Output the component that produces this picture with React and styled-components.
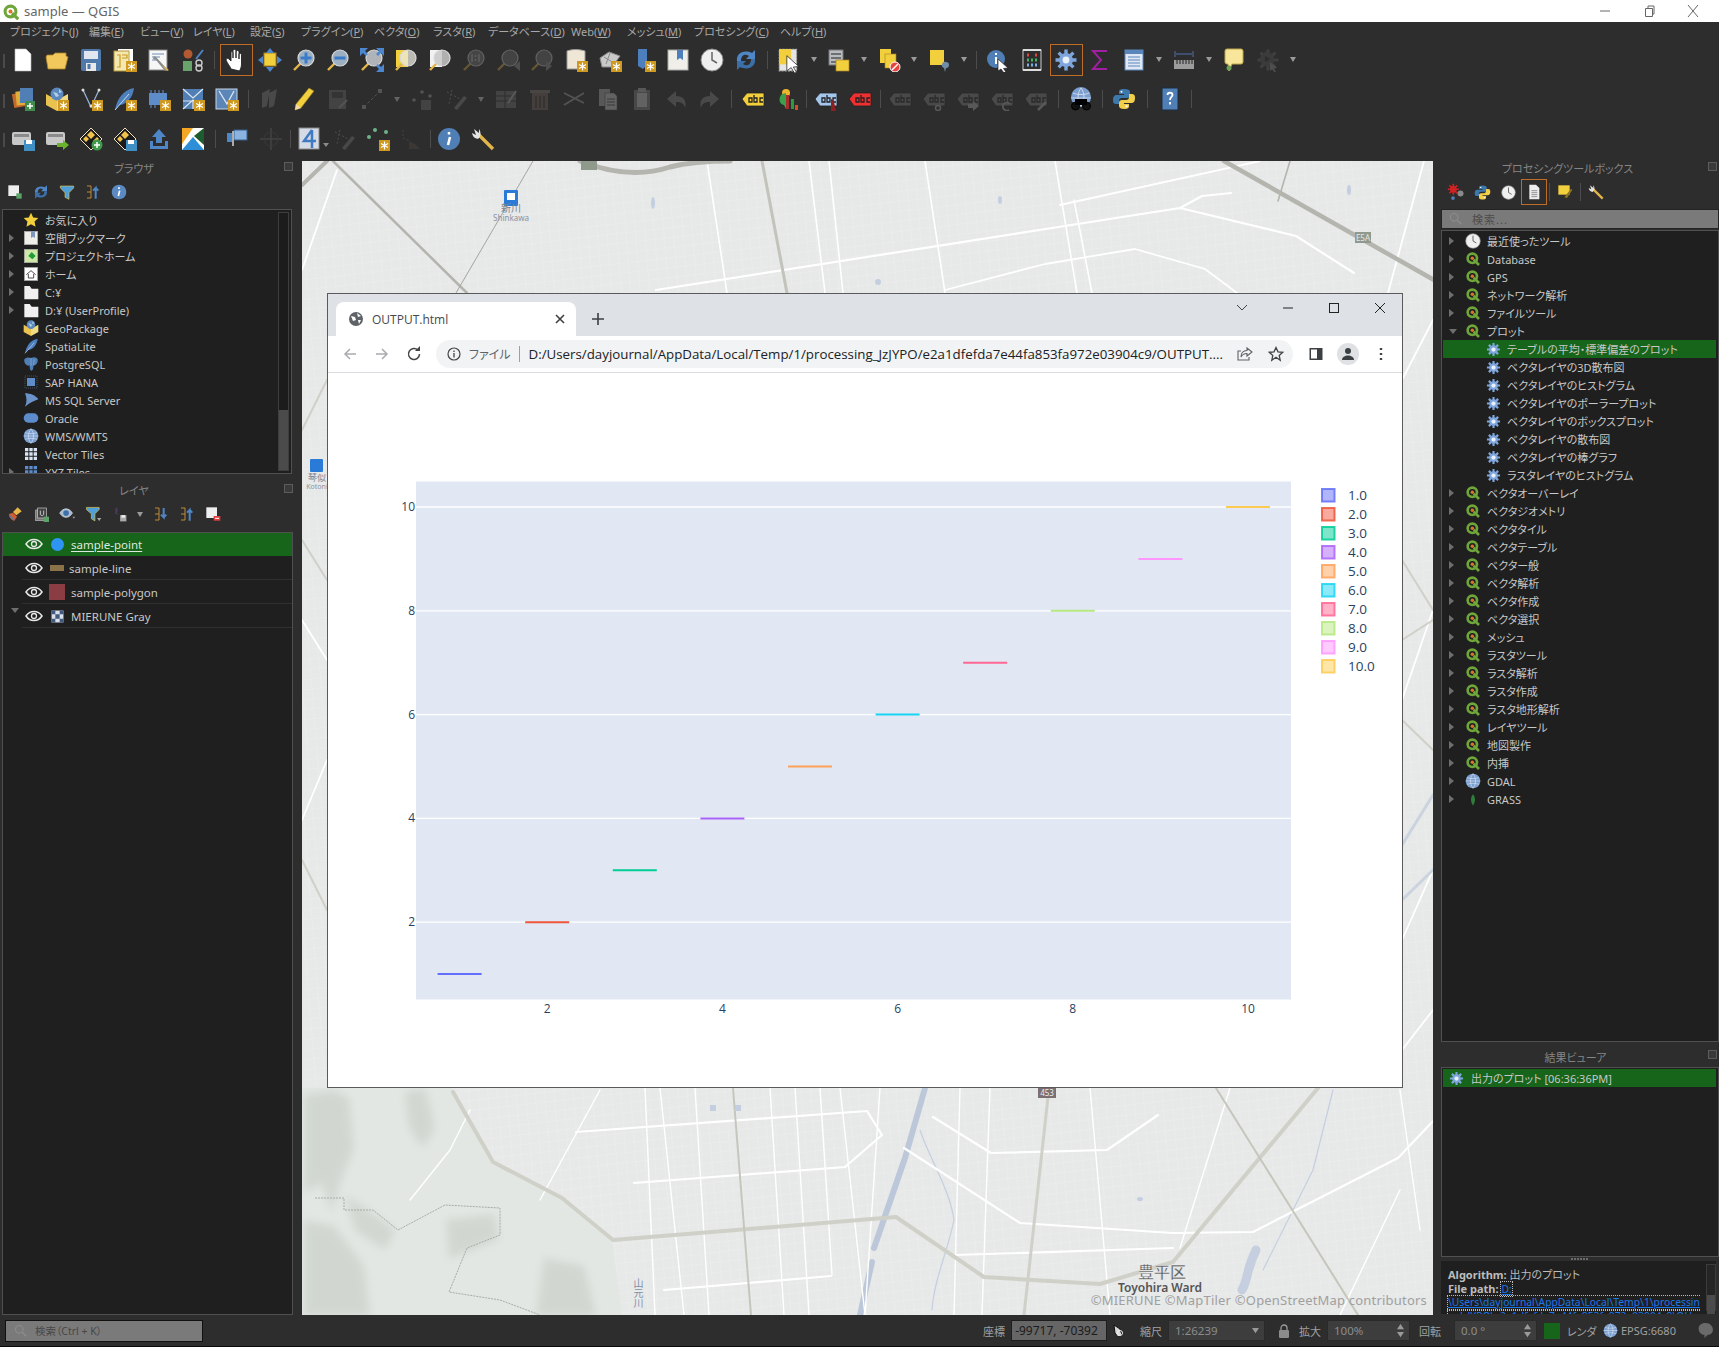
import React from 'react';
import styled, { createGlobalStyle } from 'styled-components';

const SANS = `"Noto Sans", "Noto Sans CJK JP", sans-serif`;
const CHROME = `"Open Sans", "Noto Sans CJK JP", sans-serif`;

const GlobalStyle = createGlobalStyle`
  html, body { margin: 0; padding: 0; background: #2d2d2d; }
  body { font-family: ${SANS}; font-size: 11px; font-feature-settings: "palt"; overflow: hidden; }
`;

const Shell = styled.div`
  width: 1719px;
  height: 1347px;
  display: flex;
  flex-direction: column;
  background: #2d2d2d;
  color: #c4c4c4;
  overflow: hidden;
`;
const TitleBar = styled.div`
  height: 22px;
  flex: none;
  background: #fff;
  display: flex;
  align-items: center;
  color: #666;
  font-size: 13px;
  padding-left: 2px;
  gap: 5px;
`;
const WinButtons = styled.div`
  margin-left: auto;
  display: flex;
  padding-right: 19px;
  gap: 30px;
`;
const MenuBar = styled.div`
  height: 18px;
  flex: none;
  display: flex;
  align-items: center;
  padding-left: 10px;
  color: #a8a8a8;
`;
const MenuItem = styled.span`
  width: ${(p) => p.$w}px;
  flex: none;
  white-space: nowrap;
  u { text-underline-offset: 1px; }
`;
const ToolRow = styled.div`
  height: 39.5px;
  flex: none;
  display: flex;
  align-items: center;
  padding-left: 6px;
  position: relative;
  &::before {
    content: '';
    position: absolute;
    left: 3px;
    top: 14px;
    width: 2px;
    height: 14px;
    background: #4a4a4a;
  }
`;
const ToolBtn = styled.div`
  width: ${(p) => p.$w || 34}px;
  height: 32px;
  flex: none;
  display: flex;
  align-items: center;
  justify-content: center;
  position: relative;
  opacity: ${(p) => (p.$off ? 0.3 : 1)};
  &::before {
    content: '';
    display: ${(p) => (p.$on ? 'block' : 'none')};
    position: absolute;
    left: 50%;
    top: 0;
    margin-left: -16px;
    width: 31px;
    height: 30px;
    border: 1px solid #bd6d28;
  }
  &::after {
    content: '';
    display: ${(p) => (p.$caret ? 'block' : 'none')};
    position: absolute;
    right: -2px;
    bottom: 5px;
    border: 3px solid transparent;
    border-top: 4px solid #8a8a8a;
  }
`;
const ToolCaret = styled.div`
  width: 16px;
  flex: none;
  display: flex;
  justify-content: center;
  opacity: ${(p) => (p.$off ? 0.5 : 1)};
  &::after {
    content: '';
    margin-top: 3px;
    border: 3px solid transparent;
    border-top: 5px solid #9a9a9a;
  }
`;
const ToolSep = styled.div`
  width: ${(p) => p.$w || 9}px;
  flex: none;
  display: flex;
  justify-content: center;
  &::after {
    content: '';
    width: 1px;
    height: 18px;
    background: #4c4c4c;
  }
`;
const Main = styled.div`
  flex: 1;
  min-height: 0;
  margin-top: 2.5px;
  display: grid;
  grid-template-columns: 295px 1131px 279px;
  column-gap: 7px;
`;
const Dock = styled.div`
  display: flex;
  flex-direction: column;
  min-height: 0;
`;
const DockTitle = styled.div`
  box-sizing: border-box;
  height: ${(p) => p.$h || 15}px;
  flex: none;
  display: flex;
  align-items: center;
  justify-content: center;
  color: #858585;
  position: relative;
  margin-top: ${(p) => p.$mt || 0}px;
  padding-right: ${(p) => p.$pr ?? 27}px;
  padding-bottom: 2px;
`;
const FloatMark = styled.span`
  position: absolute;
  right: 2px;
  top: 1px;
  width: 7px;
  height: 7px;
  border: 1px solid #5c5c5c;
  background: #3a3a3a;
`;
const DockTools = styled.div`
  height: 32px;
  flex: none;
  display: flex;
  align-items: center;
  padding-left: ${(p) => p.$pl || 2}px;
`;
const SmallBtn = styled.div`
  width: ${(p) => p.$w || 26}px;
  height: 26px;
  flex: none;
  display: flex;
  align-items: center;
  justify-content: center;
  position: relative;
  &::before {
    content: '';
    display: ${(p) => (p.$on ? 'block' : 'none')};
    position: absolute;
    inset: 0;
    border: 1px solid #bd6d28;
  }
`;
const Well = styled.div`
  box-sizing: border-box;
  background: #1f1f1f;
  border: 1px solid #505050;
  margin: ${(p) => p.$m || '1px 3px 0 2px'};
  height: ${(p) => (p.$h ? `${p.$h}px` : 'auto')};
  flex: ${(p) => (p.$h ? 'none' : 1)};
  min-height: 0;
  overflow: hidden;
  display: flex;
`;
const TreeBody = styled.div`
  flex: 1;
  min-width: 0;
  padding-top: ${(p) => p.$pt ?? 2}px;
`;
const ScrollTrack = styled.div`
  width: 9px;
  flex: none;
  margin: 2px 2px 2px 0;
  background: #1c1c1c;
  border: 1px solid #3d3d3d;
  display: flex;
  flex-direction: column;
  justify-content: flex-end;
`;
const ScrollThumb = styled.div`
  height: ${(p) => p.$h}px;
  background: #4b4b4b;
`;
const Row = styled.div`
  height: 18px;
  display: flex;
  align-items: center;
  white-space: nowrap;
  padding-left: ${(p) => p.$pl}px;
  color: #c8c8c8;
  background: ${(p) => (p.$sel ? '#16651a' : 'transparent')};
  margin: ${(p) => (p.$sel ? '0 2px 0 1px' : '0')};
`;
const Expander = styled.span`
  width: 0;
  height: 0;
  flex: none;
  border-style: solid;
  border-color: transparent;
  ${(p) =>
    p.$open
      ? 'border-width: 5px 4px 0 4px; border-top-color: #6e6e6e; margin-top: 1px;'
      : 'border-width: 4px 0 4px 5px; border-left-color: #6e6e6e;'}
`;
const ExpanderSlot = styled.span`
  width: ${(p) => p.$w}px;
  flex: none;
  display: flex;
`;
const RowIcon = styled.span`
  width: ${(p) => p.$w || 18}px;
  height: 16px;
  flex: none;
  display: flex;
  align-items: center;
  justify-content: center;
  margin-right: ${(p) => p.$mr ?? 5}px;
`;
const LayerRow = styled.div`
  box-sizing: border-box;
  height: 23px;
  margin-bottom: 1px;
  margin-left: ${(p) => (p.$sel ? 0 : '19px')};
  display: flex;
  align-items: center;
  position: relative;
  padding-left: ${(p) => (p.$sel ? '19px' : '0')};
  background: ${(p) => (p.$sel ? '#16651a' : 'transparent')};
  border-bottom: 1px solid ${(p) => (p.$sel ? '#16651a' : '#303030')};
  color: ${(p) => (p.$sel ? '#dfe8df' : '#c8c8c8')};
  font-size: 11.5px;
  u { text-underline-offset: 2px; }
`;
const LayerArrow = styled.span`
  position: absolute;
  left: -11px;
  top: 8px;
`;
const EyeSlot = styled.span`
  width: 24px;
  flex: none;
  display: flex;
  justify-content: center;
  margin-right: 2px;
`;
const SymbolSlot = styled.span`
  width: 18px;
  flex: none;
  display: flex;
  justify-content: center;
  margin-right: ${(p) => p.$mr ?? 5}px;
`;
const PointSym = styled.span`
  width: 13px;
  height: 13px;
  border-radius: 50%;
  background: #2f95f5;
`;
const LineSym = styled.span`
  width: 14px;
  height: 6px;
  background: #8a7349;
`;
const PolySym = styled.span`
  width: 16px;
  height: 16px;
  background: #8a3d42;
`;
const SearchBox = styled.div`
  box-sizing: border-box;
  height: 20px;
  flex: none;
  margin-top: 1px;
  background: #7a7a7a;
  border: 1px solid #242424;
  margin-left: 1px;
  display: flex;
  align-items: center;
  padding-left: 7px;
  gap: 9px;
  color: #4c4c4c;
  letter-spacing: 1px;
`;
const MapPane = styled.div`
  position: relative;
  overflow: hidden;
  background: #e8e9e9;
`;
const MapSvg = styled.svg`
  display: block;
  width: 1131px;
  height: 1154px;
`;
const Browser = styled.div`
  position: absolute;
  left: 25px;
  top: 132px;
  width: 1074px;
  height: 793px;
  border: 1px solid #5a5a5a;
  background: #fff;
  display: flex;
  flex-direction: column;
  font-family: ${CHROME};
  font-feature-settings: normal;
`;
const TabStrip = styled.div`
  height: 42px;
  flex: none;
  background: #dee1e6;
  display: flex;
  align-items: flex-end;
  padding-left: 8px;
  position: relative;
`;
const Tab = styled.div`
  width: 240px;
  height: 34px;
  background: #fff;
  border-radius: 8px 8px 0 0;
  display: flex;
  align-items: center;
  padding: 0 9px 0 12px;
  box-sizing: border-box;
  color: #45494d;
  font-size: 12px;
  gap: 8px;
`;
const TabTitle = styled.span`
  flex: 1;
`;
const NewTab = styled.div`
  width: 30px;
  height: 34px;
  margin-left: 7px;
  display: flex;
  align-items: center;
  justify-content: center;
`;
const WindowCtl = styled.div`
  position: absolute;
  right: 16px;
  top: 8px;
  display: flex;
  gap: 34px;
  align-items: center;
`;
const UrlBar = styled.div`
  height: 36px;
  flex: none;
  border-bottom: 1px solid #dadce0;
  display: flex;
  align-items: center;
  padding-left: 6px;
  box-sizing: content-box;
`;
const NavBtn = styled.div`
  width: 32px;
  flex: none;
  display: flex;
  justify-content: center;
`;
const Omni = styled.div`
  margin-left: 6px;
  width: 857px;
  height: 28px;
  flex: none;
  border-radius: 14px;
  background: #f1f3f4;
  display: flex;
  align-items: center;
  padding-left: 11px;
  box-sizing: border-box;
  font-size: 13.3px;
  color: #202124;
  white-space: nowrap;
`;
const SiteLabel = styled.span`
  color: #5f6368;
  margin-left: 8px;
  font-family: "Noto Sans CJK JP", sans-serif;
  font-feature-settings: "palt";
  font-size: 12px;
  padding-right: 8px;
  border-right: 1px solid #9aa0a6;
  line-height: 16px;
  margin-right: 9px;
`;
const UrlText = styled.span`
  width: 695px;
  flex: none;
  overflow: hidden;
`;
const OmniIcon = styled.span`
  flex: none;
  margin-left: ${(p) => p.$ml}px;
  display: flex;
`;
const Avatar = styled.span`
  width: 22px;
  height: 22px;
  border-radius: 50%;
  background: #dfe1e5;
  display: flex;
  align-items: center;
  justify-content: center;
  margin-left: ${(p) => p.$ml}px;
  flex: none;
`;
const ChartSvg = styled.svg`
  display: block;
  flex: 1;
  width: 1073px;
  min-height: 0;
`;
const ResultBody = styled.div`
  flex: 1;
  padding-top: 1px;
`;
const Splitter = styled.div`
  height: 4px;
  flex: none;
  display: flex;
  justify-content: center;
  align-items: center;
  &::after {
    content: '';
    width: 17px;
    height: 2px;
    background: repeating-linear-gradient(90deg, #6c6c6c 0 2px, transparent 2px 3px);
  }
`;
const InfoPane = styled.div`
  height: 53px;
  flex: none;
  background: #1f1f1f;
  margin-left: 1px;
  margin-right: 3px;
  display: flex;
  overflow: hidden;
`;
const InfoText = styled.div`
  flex: 1;
  min-width: 0;
  padding: 7px 0 0 7px;
  line-height: 13.5px;
  font-size: 11px;
  white-space: nowrap;
  overflow: hidden;
  color: #bcbcbc;
  b { color: #bdbdbd; }
`;
const PathLink = styled.a`
  color: #1a77e8;
  text-decoration: underline;
  outline: 1px dotted #bbb;
  font-size: 10.3px;
  display: ${(p) => (p.$block ? 'block' : 'inline')};
`;
const InfoScroll = styled.div`
  width: 10px;
  flex: none;
  margin: 3px 0 3px 5px;
  background: #252525;
  border: 1px solid #3c3c3c;
  box-sizing: border-box;
`;
const InfoThumb = styled.div`
  height: 30px;
  background: #4b4b4b;
  margin-top: 30px;
`;
const StatusBar = styled.div`
  height: 31px;
  flex: none;
  border-bottom: 1px solid #0a0a0a;
  display: flex;
  align-items: center;
`;
const GlobalSearch = styled.div`
  width: 198px;
  height: 22px;
  box-sizing: border-box;
  margin-left: 5px;
  background: #7a7a7a;
  border: 1px solid #111;
  display: flex;
  align-items: center;
  padding-left: 8px;
  gap: 7px;
  color: #474747;
  font-size: 10.5px;
`;
const StatusLabel = styled.span`
  margin-left: ${(p) => p.$ml}px;
  width: ${(p) => p.$w || 24}px;
  flex: none;
  color: #a0a0a0;
  white-space: nowrap;
`;
const StatusField = styled.div`
  margin-left: ${(p) => p.$ml}px;
  width: ${(p) => p.$w}px;
  height: 21px;
  box-sizing: border-box;
  flex: none;
  border: 1px solid ${(p) => (p.$light ? '#1e1e1e' : '#2a2a2a')};
  background: ${(p) => (p.$light ? '#666' : '#3d3d3d')};
  color: ${(p) => (p.$light ? '#1c1c1c' : '#8c8c8c')};
  font-size: ${(p) => (p.$light ? 12 : 11.5)}px;
  display: flex;
  align-items: center;
  justify-content: ${(p) => (p.$light ? 'center' : 'flex-start')};
  padding: 0 5px 0 ${(p) => (p.$light ? 0 : 6)}px;
  white-space: nowrap;
`;
const FieldEnd = styled.span`
  margin-left: auto;
  display: flex;
  flex-direction: column;
  gap: 1px;
`;
const Swatch = styled.span`
  width: 16px;
  height: 16px;
  margin-left: ${(p) => p.$ml}px;
  background: #16651a;
  flex: none;
`;
const StatusIcon = styled.span`
  margin-left: ${(p) => p.$ml}px;
  display: flex;
  flex: none;
`;

const Svg = ({ s = 24, children, vb = '0 0 24 24' }) => (
  <svg width={s} height={s} viewBox={vb} fill="none">
    {children}
  </svg>
);

const qgis = (
  <g fill="none">
    <circle cx="11" cy="11" r="7" stroke="#6fa63a" strokeWidth="4" />
    <path d="M13 13l8 8" stroke="#6fa63a" strokeWidth="4" />
    <circle cx="11" cy="11" r="2.6" fill="#d9742a" />
  </g>
);
const gearTeeth = 'M12 1.5v21M1.5 12h21M4.6 4.6l14.8 14.8M19.4 4.6L4.6 19.4';
const gear = (
  <g>
    <path d={gearTeeth} stroke="#7fa6dc" strokeWidth="3.4" />
    <circle cx="12" cy="12" r="7" fill="#7fa6dc" />
    <circle cx="12" cy="12" r="3.4" fill="#e9f0fa" />
  </g>
);
const star = (
  <g>
    <rect x="13" y="13" width="11" height="11" fill="#cf981f" />
    <path d="M18.5 14.5v8M15 16.5l7 4M22 16.5l-7 4" stroke="#fff" strokeWidth="1.2" />
  </g>
);
const mag = (lens, extra) => (
  <g>
    <path d="M2 22l7-7" stroke="#e3b64a" strokeWidth="2.4" />
    <circle cx="14" cy="10" r="8" fill={lens} stroke="#d8d8d8" strokeWidth="1.2" />
    {extra}
  </g>
);
const abc = (fill, extra) => (
  <g>
    <path d="M1 12l5-6h17v13H6z" fill={fill} stroke="#222" strokeWidth=".8" />
    <path d="M8 15v-4h3v4zM13 8v7h3v-4h-3M22 11h-3v4h3" stroke="#222" strokeWidth="1.3" />
    {extra}
  </g>
);
const sheet = (
  <path d="M4 1h11l5 5v17H4z" fill="#fff" stroke="#bbb" strokeWidth=".6" />
);

const ICONS = {
  doc: sheet,
  folder: <path d="M2 7h6l2-2h11v3l2 1-3 12H3L1 9z" fill="#f2c75c" stroke="#a98325" strokeWidth=".8" />,
  save: (
    <g>
      <rect x="2" y="1" width="20" height="22" rx="2" fill="#4f79ab" />
      <rect x="5" y="3" width="14" height="8" fill="#dfe6ef" />
      <rect x="7" y="15" width="10" height="8" fill="#e8e8e8" />
      <rect x="8.5" y="16" width="3" height="5" fill="#4f79ab" />
    </g>
  ),
  layoutNew: (
    <g>
      <rect x="5" y="1" width="15" height="20" fill="#fff" />
      <rect x="1" y="3" width="15" height="20" fill="#f4e7b0" stroke="#b99a39" />
      <path d="M4 7h3v12H4M9 7h5v3H9" stroke="#c89c20" strokeWidth="1.2" />
      {star}
    </g>
  ),
  layoutMgr: (
    <g>
      <rect x="2" y="2" width="18" height="20" fill="#f6f6f6" stroke="#888" />
      <path d="M5 6h12M5 9h8M5 12h6" stroke="#6d8db8" />
      <path d="M9 9l11 12-2 2-9-11-3-1 1-3z" fill="#8c8c8c" />
      <path d="M15 17l7 5-2 1z" fill="#e3b64a" />
    </g>
  ),
  style: (
    <g>
      <circle cx="7" cy="6" r="4.5" fill="#b45a32" />
      <path d="M15 11l7-9" stroke="#4f84c4" strokeWidth="2" />
      <rect x="2" y="13" width="9" height="10" fill="#68a36b" />
      <circle cx="18" cy="15" r="3" stroke="#ccc" strokeWidth="1.4" />
      <circle cx="18" cy="20" r="3" stroke="#ccc" strokeWidth="1.4" />
    </g>
  ),
  hand: (
    <path
      d="M7 21c-1-3-4-6-5-9 0-2 2-2 3-1l2 2V5c0-2 2-2 2 0v5-7c0-2 3-2 3 0v7-6c0-2 3-2 3 0v7-4c0-2 2.500-2 2.500 0v9c0 3-1 5-2 7z"
      fill="#fff"
      stroke="#222"
      strokeWidth=".9"
    />
  ),
  pan: (
    <g>
      <rect x="6" y="5" width="12" height="13" fill="#f2cf3c" stroke="#a98325" />
      <path d="M12 0l-4 5h8zM12 24l-4-5h8zM0 12l5-4v8zM24 12l-5-4v8z" fill="#4b86cf" />
    </g>
  ),
  zoomIn: mag('#9db0c2', <path d="M14 4.500v11M8.500 10h11" stroke="#3a7cc9" strokeWidth="3" />),
  zoomOut: mag('#9db0c2', <path d="M8.500 10h11" stroke="#3a7cc9" strokeWidth="3" />),
  zoomFull: (
    <g>
      {mag('#b0b4b8')}
      <path d="M0 0h8L5 3l3 3-2 2-3-3-3 3zM24 0h-8l3 3-3 3 2 2 3-3 3 3zM24 24h-8l3-3-3-3 2-2 3 3 3-3z" fill="#4b86cf" />
    </g>
  ),
  zoomSel: (
    <g>
      <rect x="2" y="2" width="12" height="17" fill="#f2cf3c" />
      {mag('rgba(235,235,225,.75)')}
    </g>
  ),
  zoomLayer: (
    <g>
      <rect x="2" y="2" width="12" height="17" fill="#f2f2f2" />
      {mag('rgba(200,200,200,.85)')}
    </g>
  ),
  zoom11: mag('#7d7d7d', <path d="M10 6v8M17 6v8M13.500 7v2M13.500 11v2" stroke="#ccc" strokeWidth="1.5" />),
  zoomPrev: mag('#777', <path d="M24 13l-6 5 6 5z" fill="#999" />),
  zoomNext: mag('#777', <path d="M16 13l6 5-6 5z" fill="#999" />),
  book: (
    <g>
      <path d="M3 3c5-2 12-2 18 0v18H3z" fill="#efe7d5" stroke="#999" />
      {star}
    </g>
  ),
  mapStar: (
    <g>
      <path d="M2 10l9-6 11 4-8 11H4z" fill="#c9c9c9" stroke="#888" />
      <path d="M6 9l10 6M12 5L8 16" stroke="#8a8a8a" />
      {star}
    </g>
  ),
  tabStar: (
    <g>
      <path d="M6 1h9v16l-4 4-5-3z" fill="#4c7fbc" />
      {star}
    </g>
  ),
  tabBook: (
    <g>
      <rect x="2" y="2" width="20" height="20" fill="#efeee8" stroke="#aaa" />
      <path d="M11 2h6v10l-3-2-3 2z" fill="#4c7fbc" />
    </g>
  ),
  clock: (
    <g>
      <circle cx="12" cy="12" r="11" fill="#efefef" stroke="#888" />
      <path d="M12 4v8l5 3" stroke="#666" strokeWidth="1.5" />
    </g>
  ),
  refresh: (
    <g>
      <path d="M3 13C2 6 9 1 18 5l3-3v9h-9l3-3c-5-3-8 0-8 5z" fill="#4f86c6" />
      <path d="M21 11c1 7-6 12-15 8l-3 3v-9h9l-3 3c5 3 8 0 8-5z" fill="#3b6fa8" />
    </g>
  ),
  selFeat: (
    <g>
      <path d="M3 2h16v20H3z" fill="#e5e5e5" stroke="#aaa" strokeDasharray="2 1" />
      <rect x="3" y="2" width="11" height="14" fill="#f2cf3c" />
      <path d="M10 8l11 10-5 .5 3 5-2 .5-3-5-4 3z" fill="#fff" stroke="#222" strokeWidth=".7" />
    </g>
  ),
  attrTable: (
    <g>
      <rect x="2" y="2" width="14" height="15" fill="#b9bcc2" stroke="#777" />
      <path d="M4 6h10M4 10h10M4 14h10" stroke="#555" strokeWidth="1.3" />
      <rect x="9" y="12" width="13" height="11" fill="#f2cf3c" stroke="#a98325" strokeWidth=".7" />
    </g>
  ),
  deselect: (
    <g>
      <rect x="3" y="1" width="11" height="14" fill="#f2cf3c" />
      <rect x="8" y="6" width="11" height="14" fill="#f2cf3c" stroke="#a98325" strokeWidth=".6" />
      <circle cx="18" cy="19" r="5" fill="#e4433f" stroke="#fff" />
      <path d="M15 22l6-6" stroke="#fff" strokeWidth="1.4" />
    </g>
  ),
  selPin: (
    <g>
      <rect x="3" y="2" width="14" height="15" fill="#f2cf3c" />
      <path d="M19 14a3 3 0 1 1 0 6l-1 4-1-4a3 3 0 0 1 2-6z" fill="#6f8da8" />
    </g>
  ),
  identify: (
    <g>
      <circle cx="10" cy="11" r="9" fill="#4f7fb5" />
      <path d="M10 5v2M10 9v7" stroke="#fff" strokeWidth="2" />
      <path d="M12 11l10 9-4.500.5 2.500 3.500-2 1-3-4-3 2z" fill="#fff" stroke="#222" strokeWidth=".7" />
    </g>
  ),
  abacus: (
    <g>
      <rect x="3" y="2" width="18" height="20" stroke="#ccc" />
      <path d="M3 2h18M3 22h18" stroke="#ddd" strokeWidth="2" />
      <path d="M7 7h2M15 7h2" stroke="#e0463e" strokeWidth="3" />
      <path d="M7 12h10" stroke="#43b463" strokeWidth="3" strokeDasharray="2 2" />
      <path d="M7 17h10" stroke="#7cb2e8" strokeWidth="3" strokeDasharray="2 2" />
    </g>
  ),
  gear,
  sigma: <path d="M19 3H5l8 9-8 9h14" stroke="#a01fa0" strokeWidth="2" />,
  table: (
    <g>
      <rect x="3" y="2" width="18" height="20" fill="#dfe8f4" stroke="#5a86bc" />
      <rect x="3" y="2" width="18" height="4" fill="#5a86bc" />
      <path d="M6 9h12M6 12h12M6 15h12M6 18h12" stroke="#5a86bc" strokeWidth="1.2" />
    </g>
  ),
  ruler: (
    <g>
      <path d="M3 6h18M3 3v6M21 3v6" stroke="#3d4f6d" strokeWidth="2" />
      <rect x="2" y="12" width="20" height="9" fill="#9c9c9c" />
      <path d="M5 12v4M8 12v4M11 12v4M14 12v4M17 12v4M20 12v4" stroke="#222" />
    </g>
  ),
  tip: (
    <g>
      <path d="M3 3q0-2 2-2h14q2 0 2 2v11q0 2-2 2H10l-3 7-1-7H5q-2 0-2-2z" fill="#f8e79a" stroke="#bda74a" />
      <circle cx="7" cy="20" r="2.500" fill="#6fa05a" />
    </g>
  ),
  macro: (
    <g>
      <path d={gearTeeth} stroke="#6a6a6a" strokeWidth="3" />
      <circle cx="11" cy="11" r="7" fill="#5c5c5c" />
      <path d="M9 8l5 3-5 3z" fill="#2d2d2d" />
      <path d="M14 14l7 6-3 .5 2 3.500-1.500.5-2-3-2.500 1z" fill="#9a9a9a" />
    </g>
  ),
  layers: (
    <g>
      <rect x="2" y="6" width="13" height="14" fill="#c46a2a" transform="rotate(-10 8 13)" />
      <rect x="5" y="4" width="13" height="14" fill="#e0ae3c" transform="rotate(-6 11 11)" />
      <rect x="9" y="1" width="13" height="15" fill="#4f7fb5" />
      <rect x="14" y="14" width="10" height="10" fill="#418c4a" />
      <path d="M19 16v6M16 19h6" stroke="#fff" strokeWidth="1.5" />
    </g>
  ),
  geopkg: (
    <g>
      <path d="M1 7l11 6v11L1 18z" fill="#e9c24f" />
      <path d="M23 7l-11 6v11l11-6z" fill="#f3db83" />
      <circle cx="12" cy="7" r="6.500" fill="#5b88bd" />
      <path d="M8 5l4 1 2 3-3 1zM14 2l3 3-3 1z" fill="#b4cde8" />
      {star}
    </g>
  ),
  geopkgPlain: (
    <g>
      <path d="M1 7l11 6v11L1 18z" fill="#e9c24f" />
      <path d="M23 7l-11 6v11l11-6z" fill="#f3db83" />
      <circle cx="12" cy="7" r="6.500" fill="#5b88bd" />
      <path d="M8 5l4 1 2 3-3 1zM14 2l3 3-3 1z" fill="#b4cde8" />
    </g>
  ),
  vertex: (
    <g>
      <path d="M4 3l8 17 8-17" stroke="#9ab7dc" strokeWidth="1.2" />
      <circle cx="4" cy="3" r="1.500" fill="#ddd" />
      <circle cx="20" cy="3" r="1.500" fill="#ddd" />
      <circle cx="12" cy="19" r="1.500" fill="#ddd" />
      {star}
    </g>
  ),
  vectorBox: (
    <g>
      <rect x="1" y="2" width="21" height="20" fill="#5d86b8" stroke="#c7d6e8" />
      <path d="M4 4l8 13 7-13" stroke="#dfe8f4" strokeWidth="1.300" />
      {star}
    </g>
  ),
  featherStar: (
    <g>
      <path d="M2 23C4 12 10 3 21 1c-1 10-8 17-15 17z" fill="#4c7fbc" />
      <path d="M2 23L16 7" stroke="#c7dcf2" />
      {star}
    </g>
  ),
  hanaStar: (
    <g>
      <path d="M4 3v3M8 3v3M12 3v3M16 3v3M4 18v3M8 18v3" stroke="#6f93c4" />
      <rect x="2" y="6" width="18" height="12" fill="#5d8cc9" />
      {star}
    </g>
  ),
  meshStar: (
    <g>
      <rect x="2" y="2" width="20" height="20" fill="#4f7fb5" />
      <path d="M2 2l10 9L22 2M2 22l10-9 10 9M2 14h20M12 14v8" stroke="#dfe8f4" strokeWidth="1.2" />
      {star}
    </g>
  ),
  feather: (
    <g>
      <path d="M3 23C5 12 11 3 22 1c-1 10-8 17-15 17z" fill="#4c7fbc" />
      <path d="M3 23L17 7" stroke="#c7dcf2" />
    </g>
  ),
  hana: (
    <g>
      <rect x="3" y="3" width="18" height="18" stroke="#6f93c4" strokeDasharray="1 2" />
      <rect x="6" y="6" width="12" height="12" fill="#5d8cc9" />
    </g>
  ),
  edit: (
    <g>
      <path d="M4 6l8-4-3 17-5 2zM11 6l8-4-3 17-5 2z" fill="#8a8a8a" />
    </g>
  ),
  pencil: (
    <g>
      <path d="M17 1l5 3L9 21l-6 2 1-6z" fill="#f2cf3c" stroke="#8e7322" strokeWidth=".7" />
      <path d="M3 23l1-6 5 4z" fill="#eed9ac" />
    </g>
  ),
  saveEdit: (
    <g>
      <rect x="3" y="3" width="17" height="19" fill="#777" />
      <rect x="6" y="5" width="11" height="6" fill="#444" />
      <path d="M13 21l8-8" stroke="#aaa" strokeWidth="2" />
    </g>
  ),
  line: (
    <g>
      <path d="M4 20L20 4" stroke="#aaa" strokeDasharray="3 2" />
      <rect x="2" y="18" width="4" height="4" fill="#aaa" />
      <rect x="18" y="2" width="4" height="4" fill="#aaa" />
    </g>
  ),
  points: (
    <g>
      <circle cx="4" cy="13" r="1.800" fill="#aaa" />
      <circle cx="12" cy="5" r="1.800" fill="#aaa" />
      <circle cx="20" cy="9" r="1.800" fill="#aaa" />
      <rect x="11" y="13" width="10" height="10" fill="#777" />
    </g>
  ),
  vtool: (
    <g>
      <path d="M3 5l15 8M8 3l-3 14" stroke="#999" strokeDasharray="2 2" />
      <path d="M10 21l10-12 3 2-10 12z" fill="#888" />
    </g>
  ),
  editTable: (
    <g>
      <rect x="2" y="4" width="20" height="17" fill="#777" />
      <path d="M2 9h20M2 14h20M11 4v17" stroke="#333" />
      <path d="M14 16l8-12" stroke="#bbb" strokeWidth="2" />
    </g>
  ),
  trash: (
    <g>
      <path d="M4 6h16v17H4z" fill="#7a6a64" />
      <path d="M2 3h20v3H2z" fill="#8c7c74" />
      <path d="M8 9v12M12 9v12M16 9v12" stroke="#3c3430" strokeWidth="1.500" />
    </g>
  ),
  scissors: <path d="M2 6l20 10M2 18L22 6" stroke="#aaa" strokeWidth="1.800" />,
  copy: (
    <g>
      <path d="M3 2h11v17H3z" fill="#bbb" />
      <path d="M9 6h9l3 3v14H9z" fill="#ddd" stroke="#555" strokeWidth=".6" />
      <path d="M11 12h8M11 15h8M11 18h8" stroke="#555" />
    </g>
  ),
  paste: (
    <g>
      <rect x="4" y="3" width="16" height="20" fill="#888" />
      <rect x="7" y="6" width="10" height="14" fill="#ddd" />
      <rect x="8" y="1" width="8" height="4" fill="#bbb" />
    </g>
  ),
  undo: <path d="M21 21c2-8-2-12-9-12V4L3 12l9 8v-5c5 0 8 1 9 6z" fill="#8a8a8a" />,
  redo: <path d="M3 21c-2-8 2-12 9-12V4l9 8-9 8v-5c-5 0-8 1-9 6z" fill="#8a8a8a" />,
  abcY: abc('#f3cf3c'),
  pinChart: (
    <g>
      <circle cx="11" cy="6" r="4" fill="#efb52d" />
      <path d="M7 7c-4 4-3 10 2 11l2 4V6z" fill="#3d9e4b" />
      <rect x="11" y="8" width="3" height="14" fill="#a92c2c" />
      <rect x="16" y="12" width="3" height="10" fill="#2d9b3c" />
      <rect x="20" y="18" width="3" height="5" fill="#d34f28" />
    </g>
  ),
  abcB: abc('#a3c6ea', <path d="M17 12a3.500 3.500 0 0 1 3 3l2 9h-5z" fill="#8c1f1f" />),
  abcR: abc('#f03030'),
  abcG: abc('#8a8a8a'),
  abcPin: abc('#8a8a8a', <circle cx="16" cy="21" r="2.500" stroke="#bbb" strokeWidth="1.500" />),
  abcMove: abc('#8a8a8a', <path d="M12 17h5v-3l6 5-6 5v-3h-5z" fill="#bbb" />),
  abcRot: abc('#8a8a8a', <path d="M20 17a4 4 0 1 0-1 6" stroke="#bbb" strokeWidth="1.800" />),
  abcEdit: abc('#8a8a8a', <path d="M14 23l8-8" stroke="#bbb" strokeWidth="2.500" />),
  wmsBino: (
    <g>
      <circle cx="12" cy="10" r="10" fill="#7c9fd0" />
      <path d="M4 6c4 2 12 2 16 0M2 11h20M12 1c-4 5-4 14 0 18M12 1c4 5 4 14 0 18" stroke="#e7eef7" strokeWidth=".7" />
      <circle cx="6.500" cy="19" r="4" fill="#111" stroke="#000" />
      <circle cx="17.500" cy="19" r="4" fill="#111" stroke="#000" />
      <rect x="6" y="12" width="12" height="6" fill="#000" />
    </g>
  ),
  python: (
    <g>
      <path d="M12 2c-4 0-5 1-5 3v2h5v1H5c-3 0-4 2-4 5s1 4 3 4h3v-3c0-2 1-3 3-3h5c2 0 3-1 3-3V5c0-2-2-3-6-3z" fill="#3d78ad" />
      <path d="M12 22c4 0 5-1 5-3v-2h-5v-1h7c3 0 4-2 4-5s-1-4-3-4h-3v3c0 2-1 3-3 3H10c-2 0-3 1-3 3v3c0 2 2 3 5 3z" fill="#f2cf4a" />
      <circle cx="9.500" cy="4.800" r="1" fill="#fff" />
      <circle cx="14.500" cy="19.200" r="1" fill="#fff" />
    </g>
  ),
  help: (
    <g>
      <rect x="4" y="1" width="16" height="22" fill="#4f7fb5" stroke="#1d2c40" />
      <path d="M9.500 8c0-3 5-3 5 0 0 2-2.500 2-2.500 5M12 15v2.500" stroke="#fff" strokeWidth="1.800" />
    </g>
  ),
  dbSave: (
    <g>
      <rect x="1" y="5" width="19" height="13" rx="2" fill="#c8c8c8" />
      <rect x="3" y="7" width="15" height="3" fill="#8b8b8b" />
      <rect x="13" y="13" width="11" height="11" fill="#3f8fc4" />
      <rect x="15" y="13" width="6" height="4" fill="#fff" />
    </g>
  ),
  dbOut: (
    <g>
      <rect x="1" y="5" width="19" height="13" rx="2" fill="#c8c8c8" />
      <rect x="3" y="7" width="15" height="3" fill="#8b8b8b" />
      <path d="M12 16h6v-3l6 5-6 5v-3h-6z" fill="#6bb22f" />
    </g>
  ),
  diamond: (
    <g>
      <path d="M12 1l11 11-11 11L1 12z" fill="#1b1b1b" stroke="#f0e5c0" />
      <path d="M8 8l4-4 4 4-4 4zM14 14l4-4 2 2-4 4zM4 12l3-3 3 3-3 3z" fill="#f0c24a" />
      <circle cx="18" cy="18" r="5.500" fill="#3f9a4c" />
      <path d="M18 15v6M15 18h6" stroke="#fff" strokeWidth="1.500" />
    </g>
  ),
  diamondSave: (
    <g>
      <path d="M12 1l11 11-11 11L1 12z" fill="#1b1b1b" stroke="#f0e5c0" />
      <path d="M8 8l4-4 4 4-4 4zM4 12l3-3 3 3-3 3z" fill="#f0c24a" />
      <rect x="13" y="13" width="11" height="11" fill="#3f8fc4" />
      <rect x="15" y="13" width="6" height="4" fill="#fff" />
    </g>
  ),
  upload: (
    <g>
      <path d="M3 14v8h18v-8h-3v5H6v-5z" fill="#4f86c6" />
      <path d="M12 2l7 8h-4v6H9v-6H5z" fill="#4f86c6" />
    </g>
  ),
  kepler: (
    <g>
      <rect x="1" y="1" width="22" height="22" fill="#fff" />
      <path d="M1 1h11L1 17z" fill="#f5a623" />
      <path d="M23 1v17l-10-9z" fill="#1d5c2e" />
      <path d="M12 10L1 23h22z" fill="#2e8ed8" />
    </g>
  ),
  aspect: (
    <g>
      <rect x="2" y="6" width="5" height="9" fill="#4f86c6" />
      <rect x="9" y="3" width="13" height="10" fill="#8bb3e0" stroke="#38608f" />
      <path d="M8 4v15" stroke="#fff" strokeWidth="1.200" />
    </g>
  ),
  crosshair: (
    <g>
      <path d="M12 1v22M1 12h22" stroke="#777" strokeWidth="1.500" />
      <circle cx="12" cy="12" r="7" stroke="#555" />
    </g>
  ),
  grid4: (
    <g>
      <rect x="1" y="1" width="20" height="21" fill="#d5dbe6" stroke="#888" />
      <path d="M14 3L6 14h12M14 3v18" stroke="#3f7ac2" strokeWidth="2.500" />
    </g>
  ),
  dotsStar: (
    <g>
      <circle cx="3" cy="10" r="2" fill="#6db38a" />
      <circle cx="9" cy="3" r="2" fill="#6db38a" />
      <circle cx="20" cy="5" r="2" fill="#6db38a" />
      {star}
    </g>
  ),
  pathBrown: (
    <g>
      <path d="M3 3v8l7 3" stroke="#777" strokeDasharray="2 2" />
      <path d="M9 14l6 3 5 5H9z" fill="#5c5147" />
    </g>
  ),
  info: (
    <g>
      <circle cx="12" cy="12" r="11" fill="#4f7fb5" />
      <path d="M12 5v2.500M13 10l-2 8" stroke="#fff" strokeWidth="2.500" />
    </g>
  ),
  wrench: (
    <g>
      <path d="M8 8l14 14" stroke="#e3b64a" strokeWidth="3.400" />
      <path d="M3 2l5 4V2a7 7 0 0 1-1 10 7 7 0 0 1-6-6l4 2z" fill="#e4e4e4" />
    </g>
  ),
  addSq: (
    <g>
      <rect x="2" y="2" width="16" height="16" fill="#eee" />
      <rect x="14" y="14" width="8" height="8" fill="#5ca366" />
    </g>
  ),
  delSq: (
    <g>
      <rect x="2" y="2" width="16" height="16" fill="#eee" />
      <rect x="13" y="15" width="10" height="7" fill="#df3f3f" />
      <path d="M15 18.500h6" stroke="#fff" strokeWidth="1.500" />
    </g>
  ),
  filter: <path d="M2 3h20v3l-7 7v10l-6-3v-7L2 6z" fill="#4f9fd8" stroke="#e8c84a" strokeWidth=".9" />,
  expandAll: (
    <g>
      <path d="M3 3h6v18H3M3 12h6" stroke="#d49a3a" strokeWidth="1.300" />
      <path d="M16 3v14l-4-4M16 17l4-4" stroke="#4f86c6" strokeWidth="3" />
    </g>
  ),
  collapseAll: (
    <g>
      <path d="M3 3h6v18H3M3 12h6" stroke="#d49a3a" strokeWidth="1.300" />
      <path d="M16 22V6l-4 4M16 6l4 4" stroke="#4f86c6" strokeWidth="3" />
    </g>
  ),
  infoSmall: (
    <g>
      <circle cx="12" cy="12" r="11" fill="#5b8ac2" />
      <path d="M12 5v2.500M13 10l-2 8" stroke="#fff" strokeWidth="2.500" />
    </g>
  ),
  paint: (
    <g>
      <path d="M16 2l6 6-8 6-5-5z" fill="#e9b64a" />
      <path d="M3 12l6-2 6 6-4 6c-4 0-8-5-8-10z" fill="#d35b34" />
      <path d="M4 15l7 6" stroke="#4f7fb5" strokeWidth="2" />
    </g>
  ),
  addGroup: (
    <g>
      <rect x="4" y="6" width="14" height="16" fill="#777" stroke="#bbb" />
      <rect x="7" y="3" width="13" height="15" fill="#444" stroke="#ccc" />
      <path d="M11 7v5c0 3 5 3 5 0V7" stroke="#d8d8d8" strokeWidth="1.300" />
      <rect x="16" y="16" width="8" height="8" fill="#5ca366" />
    </g>
  ),
  eyeTool: (
    <g>
      <path d="M1 10c5-8 13-8 18 0-5 8-13 8-18 0z" fill="#a8bcd4" stroke="#ddd" />
      <circle cx="10" cy="10" r="4" fill="#3f6fa8" />
      <path d="M19 15l4 0-2 3z" fill="#999" />
    </g>
  ),
  filterCaret: (
    <g>
      <path d="M2 2h18v3l-6 6v10l-5-3v-7L2 5z" fill="#4f9fd8" stroke="#e8c84a" strokeWidth=".9" />
      <path d="M17 17h6l-3 4z" fill="#aaa" />
    </g>
  ),
  exprDim: (
    <g>
      <path d="M9 2c-4 0-4 4 0 4-4 0-4 5 0 5" stroke="#5c3f70" strokeWidth="1.800" />
      <rect x="13" y="13" width="10" height="10" fill="#aaa" />
      <rect x="15" y="13" width="6" height="4" fill="#eee" />
    </g>
  ),
  starYellow: <path d="M12 1l3.300 7.200 7.700.9-5.700 5.300 1.500 7.700L12 18.200 5.200 22l1.500-7.700L1 9.100l7.700-.9z" fill="#f3cf3c" />,
  bookmark: (
    <g>
      <rect x="2" y="2" width="20" height="20" fill="#efeee8" stroke="#aaa" />
      <path d="M12 2h6v10l-3-2-3 2z" fill="#7d98bb" />
    </g>
  ),
  home: (
    <g>
      <rect x="2" y="2" width="20" height="20" fill="#fff" stroke="#999" />
      <path d="M5 13l7-6 7 6M8 12v6h8v-6" stroke="#333" strokeWidth="1.300" />
    </g>
  ),
  projHome: (
    <g>
      <rect x="2" y="2" width="20" height="20" fill="#cfe7a8" stroke="#aaa" />
      <path d="M8 12l5-6 6 6-5 5z" fill="#1f9d3b" />
    </g>
  ),
  whiteFolder: <path d="M2 3h8l3 4h10v16H2z" fill="#f0f0f0" />,
  postgres: (
    <g>
      <path d="M2 5c3-4 8-3 10-2 4-2 9-1 10 2 1 5-3 10-6 9-1 3 0 7-3 8-3 0-3-5-3-8-4 2-9-3-8-9z" fill="#4f7fb5" />
      <path d="M12 3v12M17 5c-1 3-1 6-1 9" stroke="#9ab7dc" strokeWidth=".9" />
    </g>
  ),
  mssql: <path d="M3 2c8 0 16 3 20 9-6 2-13 5-20 11 3-7 3-13 0-20z" fill="#6b93c9" />,
  oracle: <rect x="1" y="5" width="22" height="14" rx="7" fill="#5c8ccb" />,
  globe: (
    <g>
      <circle cx="12" cy="12" r="11" fill="#7c9fd0" />
      <path d="M3 7c5 2 13 2 18 0M1 12h22M3 17c5-2 13-2 18 0M12 1c-5 6-5 16 0 22M12 1c5 6 5 16 0 22" stroke="#e7eef7" strokeWidth=".8" />
    </g>
  ),
  tiles: <path d="M3 3h5v5H3zM9.500 3h5v5h-5zM16 3h5v5h-5zM3 9.500h5v5H3zM9.500 9.500h5v5h-5zM16 9.500h5v5h-5zM3 16h5v5H3zM9.500 16h5v5h-5zM16 16h5v5h-5z" fill="#d8e4f2" />,
  xyz: <path d="M3 3h5v5H3zM9.500 3h5v5h-5zM16 3h5v5h-5zM3 9.500h5v5H3zM9.500 9.500h5v5h-5zM16 9.500h5v5h-5zM3 16h5v5H3zM9.500 16h5v5h-5zM16 16h5v5h-5z" fill="#5c8ccb" />,
  qgis,
  checker: (
    <g>
      <rect x="1" y="1" width="22" height="22" fill="#d8e0ec" />
      <path d="M1 1h7v7H1zM16 1h7v7h-7zM8 8h8v8H8zM1 16h7v7H1zM16 16h7v7h-7z" fill="#42597d" />
    </g>
  ),
  gearsRed: (
    <g>
      <path d={gearTeeth} stroke="#d02222" strokeWidth="3" transform="scale(.7)" />
      <circle cx="8.400" cy="8.400" r="4.500" fill="#d02222" />
      <circle cx="18" cy="14" r="4" fill="#8a8a8a" />
      <circle cx="8" cy="20" r="2.500" fill="#4f7fb5" />
    </g>
  ),
  script: (
    <g>
      <path d="M5 1h10l5 5v17H5z" fill="#eee" />
      <path d="M8 10h9M8 13h9M8 16h9M8 19h9" stroke="#666" />
    </g>
  ),
  note: (
    <g>
      <rect x="2" y="2" width="17" height="14" fill="#f2cf3c" />
      <path d="M11 20l10-13 2 2-8 12z" fill="#8c7322" />
    </g>
  ),
  search: (
    <g>
      <circle cx="9" cy="9" r="6.500" stroke="#8c8c8c" strokeWidth="2" />
      <path d="M14 14l7 7" stroke="#8c8c8c" strokeWidth="2.500" />
    </g>
  ),
  grass: <path d="M12 22C8 16 8 10 12 5c4 5 4 11 0 17z" fill="#2f7d3a" />,
};

const I = ({ n, s = 24 }) => <Svg s={s}>{ICONS[n]}</Svg>;

const Eye = () => (
  <svg width="18" height="12" viewBox="0 0 18 12" fill="none">
    <path d="M1 6c4-6 12-6 16 0-4 6-12 6-16 0z" stroke="#e8e8e8" strokeWidth="1.500" />
    <circle cx="9" cy="6" r="2.500" stroke="#e8e8e8" strokeWidth="1.300" />
  </svg>
);

// toolbar rows: icon name, or an object for separators and carets
const sep = (w = 9) => ({ sep: w });
const caret = (off) => ({ caret: true, off });

const ROW1 = [
  'doc', 'folder', 'save', 'layoutNew', 'layoutMgr', 'style', sep(),
  { n: 'hand', on: true }, 'pan', 'zoomIn', 'zoomOut', 'zoomFull', 'zoomSel', 'zoomLayer',
  { n: 'zoom11', off: true }, { n: 'zoomPrev', off: true }, { n: 'zoomNext', off: true },
  'book', 'mapStar', 'tabStar', 'tabBook', 'clock', 'refresh', sep(),
  { n: 'selFeat', s: 26 }, caret(), 'attrTable', caret(), 'deselect', caret(), 'selPin', caret(), sep(),
  'identify', 'abacus', { n: 'gear', on: true }, 'sigma', 'table', caret(), 'ruler', caret(), 'tip',
  { n: 'macro', off: true }, caret(),
];
const ROW2 = [
  'layers', 'geopkg', 'vertex', 'featherStar', 'hanaStar', 'meshStar', 'vectorBox', sep(),
  { n: 'edit', off: true }, 'pencil', { n: 'saveEdit', off: true }, { n: 'line', off: true }, caret(true),
  { n: 'points', off: true }, { n: 'vtool', off: true }, caret(true),
  { n: 'editTable', off: true }, { n: 'trash', off: true }, { n: 'scissors', off: true },
  { n: 'copy', off: true }, { n: 'paste', off: true }, { n: 'undo', off: true }, { n: 'redo', off: true }, sep(),
  'abcY', 'pinChart', sep(5), 'abcB', 'abcR', sep(6),
  { n: 'abcG', off: true }, { n: 'abcPin', off: true }, { n: 'abcMove', off: true }, { n: 'abcRot', off: true }, { n: 'abcEdit', off: true }, sep(11),
  'wmsBino', sep(), 'python', sep(12), 'help', sep(),
];
const ROW3 = [
  'dbSave', 'dbOut', 'diamond', 'diamondSave', 'upload', 'kepler', sep(10),
  'aspect', { n: 'crosshair', off: true }, sep(5),
  { n: 'grid4', caret: true }, { n: 'vtool', off: true }, 'dotsStar', { n: 'pathBrown', off: true }, sep(3),
  'info', 'wrench',
];

const ToolStrip = ({ items }) => (
  <ToolRow>
    {items.map((it, i) => {
      if (it.caret && !it.n) return <ToolCaret key={i} $off={it.off} />;
      if (it.sep !== undefined) return <ToolSep key={i} $w={it.sep} />;
      const d = typeof it === 'string' ? { n: it } : it;
      return (
        <ToolBtn key={i} $on={d.on} $off={d.off} $caret={d.caret}>
          <I n={d.n} s={d.s || 24} />
        </ToolBtn>
      );
    })}
  </ToolRow>
);

const MENU = [
  ['プロジェクト', 'J', 79], ['編集', 'E', 51], ['ビュー', 'V', 53], ['レイヤ', 'L', 57],
  ['設定', 'S', 51], ['プラグイン', 'P', 73], ['ベクタ', 'O', 59], ['ラスタ', 'R', 55],
  ['データベース', 'D', 83], ['Web', 'W', 56], ['メッシュ', 'M', 67], ['プロセシング', 'C', 86], ['ヘルプ', 'H', 60],
];

const BROWSER_ITEMS = [
  ['starYellow', 'お気に入り', false], ['bookmark', '空間ブックマーク', true], ['projHome', 'プロジェクトホーム', true],
  ['home', 'ホーム', true], ['whiteFolder', 'C:¥', true], ['whiteFolder', 'D:¥ (UserProfile)', true],
  ['geopkgPlain', 'GeoPackage', false], ['feather', 'SpatiaLite', false], ['postgres', 'PostgreSQL', false],
  ['hana', 'SAP HANA', false], ['mssql', 'MS SQL Server', false], ['oracle', 'Oracle', false],
  ['globe', 'WMS/WMTS', false], ['tiles', 'Vector Tiles', false], ['xyz', 'XYZ Tiles', true],
];

const TOOL_GROUPS = [
  ['clock', '最近使ったツール'], ['qgis', 'Database'], ['qgis', 'GPS'], ['qgis', 'ネットワーク解析'],
  ['qgis', 'ファイルツール'], ['qgis', 'プロット', 'open'],
];
const PLOT_TOOLS = [
  'テーブルの平均・標準偏差のプロット', 'ベクタレイヤの3D散布図', 'ベクタレイヤのヒストグラム', 'ベクタレイヤのポーラープロット',
  'ベクタレイヤのボックスプロット', 'ベクタレイヤの散布図', 'ベクタレイヤの棒グラフ', 'ラスタレイヤのヒストグラム',
];
const TOOL_GROUPS2 = [
  ['qgis', 'ベクタオーバーレイ'], ['qgis', 'ベクタジオメトリ'], ['qgis', 'ベクタタイル'], ['qgis', 'ベクタテーブル'],
  ['qgis', 'ベクター般'], ['qgis', 'ベクタ解析'], ['qgis', 'ベクタ作成'], ['qgis', 'ベクタ選択'], ['qgis', 'メッシュ'],
  ['qgis', 'ラスタツール'], ['qgis', 'ラスタ解析'], ['qgis', 'ラスタ作成'], ['qgis', 'ラスタ地形解析'], ['qgis', 'レイヤツール'],
  ['qgis', '地図製作'], ['qgis', '内挿'], ['globe', 'GDAL'], ['grass', 'GRASS'],
];

const TreeRow = ({ icon, text, arrow, open, slot = 19, pl = 4 }) => (
  <Row $pl={pl}>
    <ExpanderSlot $w={slot}>{arrow ? <Expander $open={open} /> : null}</ExpanderSlot>
    <RowIcon>
      <I n={icon} s={16} />
    </RowIcon>
    {text}
  </Row>
);

// plotly default discrete colours
const PLOT = ['#636efa', '#EF553B', '#00cc96', '#ab63fa', '#FFA15A', '#19d3f3', '#FF6692', '#B6E880', '#FF97FF', '#FECB52'];
const px = (v) => 459.6 + (v - 1) * 87.6;
const py = (v) => 506.5 + (10 - v) * 51.9;

const Chart = () => (
  <ChartSvg viewBox="328 373 1073 713" fontFamily={`"Open Sans", sans-serif`} fontSize="12" fill="#2a3f5f">
    <rect x="416" y="481" width="875" height="518" fill="#e1e8f3" />
    {[2, 4, 6, 8, 10].map((v) => (
      <g key={v}>
        <line x1="416" x2="1291" y1={py(v)} y2={py(v)} stroke="#fff" strokeWidth="1.300" />
        <text x="415" y={py(v) + 4} textAnchor="end">{v}</text>
        <text x={px(v)} y="1012" textAnchor="middle">{v}</text>
      </g>
    ))}
    {PLOT.map((c, i) => (
      <line key={c} x1={px(i + 1) - 22} x2={px(i + 1) + 22} y1={py(i + 1)} y2={py(i + 1)} stroke={c} strokeWidth="2" />
    ))}
    {PLOT.map((c, i) => (
      <g key={c}>
        <rect x="1322" y={488.500 + i * 19} width="12.500" height="12.500" fill={c} fillOpacity=".5" stroke={c} strokeWidth="2" strokeOpacity=".85" />
        <text x="1348" y={499 + i * 19} fontSize="13.500">{(i + 1).toFixed(1)}</text>
      </g>
    ))}
  </ChartSvg>
);

// fine street fabric, two families of almost parallel lines
const fine = [];
for (let i = 0; i < 130; i++) {
  const x = 240 + i * 9.500;
  fine.push(<line key={`a${i}`} x1={x} y1="161" x2={x + 95} y2="1315" />);
  const y = 80 + i * 10;
  fine.push(<line key={`b${i}`} x1="302" y1={y + 60} x2="1433" y2={y - 70} />);
}

const MapArt = () => (
  <MapSvg viewBox="302 161 1131 1154" fontFamily={`"Noto Sans", "Noto Sans CJK JP", sans-serif`}>
    <defs>
      <filter id="soft" x="-20%" y="-20%" width="140%" height="140%">
        <feGaussianBlur stdDeviation="4" />
      </filter>
    </defs>
    <rect x="302" y="161" width="1131" height="1154" fill="#e7e8e8" />
    <g stroke="#f2f2f2" strokeWidth=".6" opacity=".55">{fine}</g>
    {/* hills, bottom left */}
    <path d="M302 1088h150l40 74 70 36 50 42 10 75H302z" fill="#e3e7e3" />
    <g filter="url(#soft)" fill="#bcc3bc" opacity=".45">
      <path d="M304 1095l30-5 15 8 5 50-14 35-8 30-10-30-18 10z" />
      <path d="M446 1220l48-6 5 25-30 12-20 8z" />
      <path d="M304 1220l30 6 30 40 6 50h-66z" />
      <path d="M345 1195l30 20 20 15-10 20-30-20z" />
      <path d="M544 1258l40 8 12 50h-60z" />
      <path d="M405 1092l20-4 10 40-12 20-14-20z" />
    </g>
    <path d="M315 1198h29v12h29l25 20 47-25 55 3v27l-33 13-18 44 51 8 40 15" fill="none" stroke="#a8aca8" strokeWidth="1" strokeDasharray="2 1" />
    <g fill="none" strokeLinecap="round" strokeLinejoin="round">
      <path d="M925 1088l-20 70-31 90" stroke="#bcc8d9" strokeWidth="6" />
      <path d="M872 1262l-12 53" stroke="#bcc8d9" strokeWidth="6" />
      <path d="M920 1130c10 30 30 60 34 90-6 30-20 60-22 90M1333 1090l-20 80-50 100" stroke="#c5cfe0" strokeWidth="1.200" />
      <path d="M1256 1250c-10 20-8 30-14 40" stroke="#c5cfe0" strokeWidth="9" />
      <g stroke="#fff">
        <path d="M576 1132l291-21 15 24-37 32-211 16M664 1290l167-14M933 1117l58 36 116-3 51-35M904 1148l116 75 153 10 80-1 145-74 36-38M955 1255l218-7" strokeWidth="2.200" />
        <path d="M656 290l524-82 22-12 29-3M1180 208l116 28 58 37" strokeWidth="2.200" />
        <path d="M707 161l20 132M809 161l16 132M829 161l14 132M925 161l20 132M1055 161l22 132M1074 200l18 93" strokeWidth="1.600" />
        <path d="M1060 205l200-44M945 290l100-26 90-15 70 20 60 45" strokeWidth="1.800" />
        <path d="M645 1088l10 227M660 1088l24 227M695 1088l14 227M770 1088l14 227M795 1088l14 227M820 1088l12 187M840 1088l25 227M880 1088l-15 227M960 1088l-6 227M990 1088l-8 227M1090 1088l20 227M1400 1090l20 140M1230 1088l-50 160M1400 1190l-60 125M600 1090l-60 110M470 1110l-20 40-40 50" strokeWidth="1.400" />
        <path d="M302 270l35-100M1424 161l-36 132M1402 700l31-90M1402 380l31-60M1402 940l31-70M1402 1050l31-40M302 820l25-60M302 620l25 40" strokeWidth="1.800" />
      </g>
      <g stroke="#cfd1c8">
        <path d="M453 1092l40 70 69 36 51 42 283-23 88 60 116 7 73-22 145-174" strokeWidth="4" />
        <path d="M1049 1088l-25 227" strokeWidth="3" />
        <path d="M733 1088l18 227M1216 1088l142 227" strokeWidth="2" stroke="#c5c7bc" />
        <path d="M762 161l25 132" strokeWidth="3" stroke="#c2c3ba" />
      </g>
      <g stroke="#b4b5ae">
        <path d="M1224 161l210 119" strokeWidth="4.500" />
        <path d="M302 185l25-24" strokeWidth="4" />
        <path d="M580 161c30 12 60 16 90 6 20-5 40-6 60-6" strokeWidth="5" />
        <path d="M333 161l134 132" strokeWidth="2.500" />
        <path d="M1290 161l-12 40" strokeWidth="1.600" />
        <path d="M533 161l-77 132" strokeWidth="1" stroke="#a5a5a0" />
        <path d="M1402 560l31 50M1402 640l31-20M1402 720l31 30" strokeWidth="2" stroke="#cfd1c8" />
        <path d="M1402 900l31-30M1402 845l31-50" strokeWidth="3" stroke="#cbd3de" />
        <path d="M302 540l25 40M302 430l25-50M302 860l25 50" strokeWidth="2" stroke="#cfd1c8" />
      </g>
    </g>
    <g fill="#c3cfe0">
      <ellipse cx="1000" cy="200" rx="2" ry="4" />
      <ellipse cx="653" cy="203" rx="2" ry="6" />
      <ellipse cx="878" cy="282" rx="3" ry="3" />
      <ellipse cx="1349" cy="190" rx="2" ry="5" />
      <rect x="710" y="1105" width="6" height="6" />
      <rect x="735" y="1105" width="6" height="6" />
      <ellipse cx="1140" cy="1199" rx="3" ry="2" />
    </g>
    <rect x="504" y="190" width="14" height="16" rx="1" fill="#2a7bd8" />
    <rect x="507" y="193" width="8" height="7" fill="#fff" />
    <text x="511" y="212" fontSize="10" fill="#7b8390" textAnchor="middle">新川</text>
    <text x="511" y="221" fontSize="8" fill="#8a93a0" textAnchor="middle">Shinkawa</text>
    <rect x="581" y="161" width="16" height="9" fill="#909a8c" />
    <rect x="1355" y="232" width="16" height="11" fill="#909a8c" />
    <text x="1363" y="241" fontSize="8" fill="#e6e6e6" textAnchor="middle">E5A</text>
    <rect x="1038" y="1087" width="18" height="11" fill="#7b6f72" />
    <text x="1047" y="1096" fontSize="8" fill="#eee" textAnchor="middle">453</text>
    <rect x="310" y="459" width="13" height="13" rx="1" fill="#2a7bd8" />
    <text x="317" y="481" fontSize="9" fill="#7b8390" textAnchor="middle">琴似</text>
    <text x="317" y="489" fontSize="7" fill="#8a93a0" textAnchor="middle">Kotoni</text>
    <text x="1162" y="1278" fontSize="16" fontWeight="500" fill="#5a5a5a" textAnchor="middle" stroke="#eee" strokeWidth=".3">豊平区</text>
    <text x="1160" y="1292" fontSize="12" fontWeight="600" fill="#555" textAnchor="middle">Toyohira Ward</text>
    <text x="638" y="1278" fontSize="10" fill="#8190a8" style={{ writingMode: 'vertical-rl' }}>山元川</text>
    <text x="1427" y="1305" fontSize="13" fill="#a0a0a0" textAnchor="end" letterSpacing=".2">©MIERUNE ©MapTiler ©OpenStreetMap contributors</text>
  </MapSvg>
);

const ChromeWindow = () => (
  <Browser>
    <TabStrip>
      <Tab>
        <Svg s={16} vb="0 0 16 16">
          <circle cx="8" cy="8" r="7" fill="#5f6368" />
          <path d="M3 5l4 1 1 3-3 1zM9 2l4 3-3 1zM10 9l3 0-2 4z" fill="#fff" />
        </Svg>
        <TabTitle>OUTPUT.html</TabTitle>
        <Svg s={14} vb="0 0 14 14">
          <path d="M3 3l8 8M11 3l-8 8" stroke="#3c4043" strokeWidth="1.600" />
        </Svg>
      </Tab>
      <NewTab>
        <Svg s={16} vb="0 0 16 16">
          <path d="M8 2v12M2 8h12" stroke="#3c4043" strokeWidth="1.600" />
        </Svg>
      </NewTab>
      <WindowCtl>
        <Svg s={12} vb="0 0 12 12">
          <path d="M1 3l5 5 5-5" stroke="#444" />
        </Svg>
        <Svg s={12} vb="0 0 12 12">
          <path d="M1 6h10" stroke="#222" />
        </Svg>
        <Svg s={12} vb="0 0 12 12">
          <rect x="1.500" y="1.500" width="9" height="9" stroke="#222" />
        </Svg>
        <Svg s={12} vb="0 0 12 12">
          <path d="M1 1l10 10M11 1L1 11" stroke="#222" />
        </Svg>
      </WindowCtl>
    </TabStrip>
    <UrlBar>
      <NavBtn>
        <Svg s={16} vb="0 0 16 16">
          <path d="M14 8H3M8 3L3 8l5 5" stroke="#a8abaf" strokeWidth="1.500" />
        </Svg>
      </NavBtn>
      <NavBtn>
        <Svg s={16} vb="0 0 16 16">
          <path d="M2 8h11M8 3l5 5-5 5" stroke="#a8abaf" strokeWidth="1.500" />
        </Svg>
      </NavBtn>
      <NavBtn>
        <Svg s={16} vb="0 0 16 16">
          <path d="M13.500 8A5.500 5.500 0 1 1 12 4.200" stroke="#444" strokeWidth="1.500" />
          <path d="M9 5h5V0z" fill="#444" />
        </Svg>
      </NavBtn>
      <Omni>
        <Svg s={14} vb="0 0 14 14">
          <circle cx="7" cy="7" r="6" stroke="#444" strokeWidth="1.200" />
          <path d="M7 6v4.500M7 3.500v1.500" stroke="#444" strokeWidth="1.300" />
        </Svg>
        <SiteLabel>ファイル</SiteLabel>
        <UrlText>D:/Users/dayjournal/AppData/Local/Temp/1/processing_JzJYPO/e2a1dfefda7e44fa853fa972e03904c9/OUTPUT....</UrlText>
        <OmniIcon $ml={13}>
          <Svg s={16} vb="0 0 16 16">
            <path d="M10 2l5 4-5 4V7.500C7 7.500 5 9 4 11c0-4 2-6.500 6-6.500zM12 11v3H1V5h3" stroke="#5f6368" strokeWidth="1.100" />
          </Svg>
        </OmniIcon>
        <OmniIcon $ml={15}>
          <Svg s={16} vb="0 0 16 16">
            <path d="M8 1.500l2 4.300 4.700.5-3.500 3.200 1 4.700L8 11.300l-4.200 2.900 1-4.700L1.300 6.300 6 5.800z" stroke="#444" strokeWidth="1.300" />
          </Svg>
        </OmniIcon>
      </Omni>
      <OmniIcon $ml={15}>
        <Svg s={16} vb="0 0 16 16">
          <rect x="1.500" y="2" width="13" height="12" fill="#3c4043" />
          <rect x="3" y="3.500" width="6" height="9" fill="#fff" />
        </Svg>
      </OmniIcon>
      <Avatar $ml={13}>
        <Svg s={14} vb="0 0 14 14">
          <circle cx="7" cy="4" r="3" fill="#3c4043" />
          <path d="M1 13c0-6 12-6 12 0z" fill="#3c4043" />
        </Svg>
      </Avatar>
      <OmniIcon $ml={14}>
        <Svg s={16} vb="0 0 16 16">
          <path d="M8 2v2M8 7v2M8 12v2" stroke="#444" strokeWidth="2.400" />
        </Svg>
      </OmniIcon>
    </UrlBar>
    <Chart />
  </Browser>
);

const Updown = () => (
  <FieldEnd>
    <Svg s={7} vb="0 0 8 8">
      <path d="M4 1l4 6H0z" fill="#9a9a9a" />
    </Svg>
    <Svg s={7} vb="0 0 8 8">
      <path d="M4 7l4-6H0z" fill="#9a9a9a" />
    </Svg>
  </FieldEnd>
);

export default function App() {
  return (
    <Shell>
      <GlobalStyle />
      <TitleBar>
        <Svg s={17} vb="0 0 22 22">{qgis}</Svg>
        sample — QGIS
        <WinButtons>
          <Svg s={14} vb="0 0 14 14">
            <path d="M2 7h10" stroke="#666" />
          </Svg>
          <Svg s={14} vb="0 0 14 14">
            <path d="M3.500 4.500h7v8h-7zM6 4.500V2h6v8h-1.500" stroke="#666" />
          </Svg>
          <Svg s={14} vb="0 0 14 14">
            <path d="M2 1l10 12M12 1L2 13" stroke="#666" />
          </Svg>
        </WinButtons>
      </TitleBar>
      <MenuBar>
        {MENU.map(([label, key, w]) => (
          <MenuItem key={label} $w={w}>
            {label}(<u>{key}</u>)
          </MenuItem>
        ))}
      </MenuBar>
      <ToolStrip items={ROW1} />
      <ToolStrip items={ROW2} />
      <ToolStrip items={ROW3} />
      <Main>
        <Dock>
          <DockTitle>ブラウザ<FloatMark /></DockTitle>
          <DockTools>
            {['addSq', 'refresh', 'filter', 'collapseAll', 'infoSmall'].map((n) => (
              <SmallBtn key={n}>
                <I n={n} s={16} />
              </SmallBtn>
            ))}
          </DockTools>
          <Well $h={265}>
            <TreeBody $pt={1}>
              {BROWSER_ITEMS.map(([icon, text, arrow]) => (
                <TreeRow key={text} icon={icon} text={text} arrow={arrow} slot={13} pl={6} />
              ))}
            </TreeBody>
            <ScrollTrack>
              <ScrollThumb $h={60} />
            </ScrollTrack>
          </Well>
          <DockTitle $mt={9}>レイヤ<FloatMark /></DockTitle>
          <DockTools>
            <SmallBtn><I n="paint" s={16} /></SmallBtn>
            <SmallBtn><I n="addGroup" s={16} /></SmallBtn>
            <SmallBtn><I n="eyeTool" s={17} /></SmallBtn>
            <SmallBtn><I n="filterCaret" s={17} /></SmallBtn>
            <SmallBtn><I n="exprDim" s={15} /></SmallBtn>
            <ToolCaret />
            <SmallBtn><I n="expandAll" s={16} /></SmallBtn>
            <SmallBtn><I n="collapseAll" s={16} /></SmallBtn>
            <SmallBtn><I n="delSq" s={16} /></SmallBtn>
          </DockTools>
          <Well $m="2px 2px 0 2px">
            <TreeBody $pt={0}>
              <LayerRow $sel>
                <EyeSlot><Eye /></EyeSlot>
                <SymbolSlot $mr={5}><PointSym /></SymbolSlot>
                <u>sample-point</u>
              </LayerRow>
              <LayerRow>
                <EyeSlot><Eye /></EyeSlot>
                <SymbolSlot $mr={3}><LineSym /></SymbolSlot>
                sample-line
              </LayerRow>
              <LayerRow>
                <EyeSlot><Eye /></EyeSlot>
                <SymbolSlot $mr={5}><PolySym /></SymbolSlot>
                sample-polygon
              </LayerRow>
              <LayerRow>
                <LayerArrow><Expander $open /></LayerArrow>
                <EyeSlot><Eye /></EyeSlot>
                <SymbolSlot $mr={5}><I n="checker" s={13} /></SymbolSlot>
                MIERUNE Gray
              </LayerRow>
            </TreeBody>
          </Well>
        </Dock>
        <MapPane>
          <MapArt />
          <ChromeWindow />
        </MapPane>
        <Dock>
          <DockTitle $pr={24}>プロセシングツールボックス<FloatMark /></DockTitle>
          <DockTools $pl={3}>
            <SmallBtn><I n="gearsRed" s={18} /></SmallBtn>
            <SmallBtn><I n="python" s={17} /></SmallBtn>
            <SmallBtn><I n="clock" s={15} /></SmallBtn>
            <SmallBtn $on><I n="script" s={16} /></SmallBtn>
            <ToolSep $w={5} />
            <SmallBtn><I n="note" s={16} /></SmallBtn>
            <ToolSep $w={5} />
            <SmallBtn><I n="wrench" s={16} /></SmallBtn>
          </DockTools>
          <SearchBox>
            <I n="search" s={14} />
            検索...
          </SearchBox>
          <Well $m="1px 0 0 1px" $h={812}>
            <TreeBody $pt={1}>
              {TOOL_GROUPS.map(([icon, text, open]) => (
                <TreeRow key={text} icon={icon} text={text} arrow open={!!open} slot={15} pl={7} />
              ))}
              {PLOT_TOOLS.map((text, i) => (
                <Row key={text} $pl={i === 0 ? 41 : 42} $sel={i === 0}>
                  <RowIcon $mr={5}><I n="gear" s={15} /></RowIcon>
                  {text}
                </Row>
              ))}
              {TOOL_GROUPS2.map(([icon, text]) => (
                <TreeRow key={text} icon={icon} text={text} arrow slot={15} pl={7} />
              ))}
            </TreeBody>
          </Well>
          <DockTitle $mt={7} $h={17} $pr={8}>結果ビューア<FloatMark /></DockTitle>
          <Well $m="1px 0 0 1px" $h={190}>
            <ResultBody>
              <Row $pl={4} $sel>
                <RowIcon $mr={6}><I n="gear" s={15} /></RowIcon>
                出力のプロット [06:36:36PM]
              </Row>
            </ResultBody>
          </Well>
          <Splitter />
          <InfoPane>
            <InfoText>
              <b>Algorithm:</b> 出力のプロット<br />
              <b>File path:</b> <PathLink>D:</PathLink>
              <PathLink $block>\Users\dayjournal\AppData\Local\Temp\1\processin</PathLink>
              <PathLink $block>g_JzJYPO\e2a1dfefda7e44fa853fa972e03904c9\OU</PathLink>
            </InfoText>
            <InfoScroll><InfoThumb /></InfoScroll>
          </InfoPane>
        </Dock>
      </Main>
      <StatusBar>
        <GlobalSearch>
          <I n="search" s={14} />
          検索（Ctrl + K）
        </GlobalSearch>
        <StatusLabel $ml={780}>座標</StatusLabel>
        <StatusField $ml={4} $w={96} $light>-99717, -70392</StatusField>
        <StatusIcon $ml={4}>
          <Svg s={16} vb="0 0 16 16">
            <path d="M3 2l6 4 2 6-4 2-3-4z" fill="#d8d8d8" stroke="#111" />
            <circle cx="9" cy="10" r="2.500" stroke="#eee" />
          </Svg>
        </StatusIcon>
        <StatusLabel $ml={13}>縮尺</StatusLabel>
        <StatusField $ml={4} $w={97}>
          1:26239
          <FieldEnd>
            <Svg s={7} vb="0 0 8 8">
              <path d="M4 7l4-6H0z" fill="#9a9a9a" />
            </Svg>
          </FieldEnd>
        </StatusField>
        <StatusIcon $ml={12}>
          <Svg s={14} vb="0 0 14 14">
            <path d="M4 7V4a3 3 0 0 1 6 0v3" stroke="#9a9a9a" strokeWidth="1.300" />
            <rect x="2" y="6" width="10" height="8" rx="1" fill="#8c8c8c" />
          </Svg>
        </StatusIcon>
        <StatusLabel $ml={8}>拡大</StatusLabel>
        <StatusField $ml={4} $w={83}>
          100%
          <Updown />
        </StatusField>
        <StatusLabel $ml={9}>回転</StatusLabel>
        <StatusField $ml={11} $w={83}>
          0.0 °
          <Updown />
        </StatusField>
        <Swatch $ml={7} />
        <StatusLabel $ml={7} $w={26}>レンダ</StatusLabel>
        <StatusIcon $ml={10}>
          <I n="globe" s={15} />
        </StatusIcon>
        <StatusLabel $ml={3} $w={60}>EPSG:6680</StatusLabel>
        <StatusIcon $ml={16}>
          <Svg s={17} vb="0 0 17 17">
            <path d="M8.500 1c9 0 10 12 2 12l-3 3v-3C0 12-1 1 8.500 1z" fill="#6a6a6a" />
          </Svg>
        </StatusIcon>
      </StatusBar>
    </Shell>
  );
}
